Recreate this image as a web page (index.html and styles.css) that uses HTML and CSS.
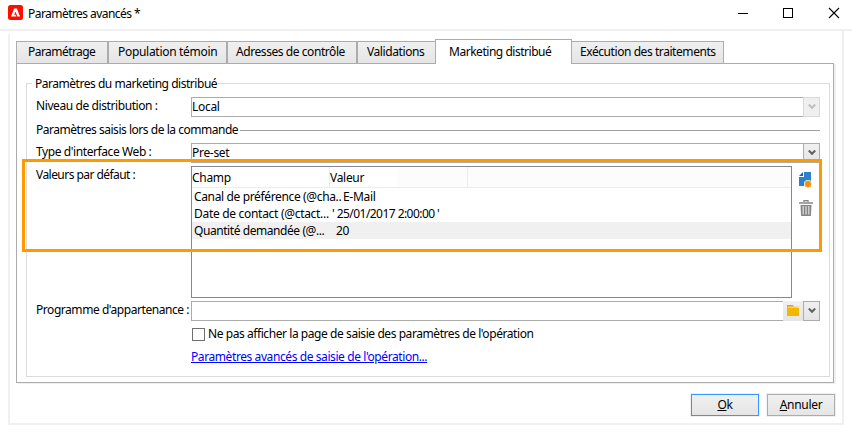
FILE: index.html
```html
<!DOCTYPE html>
<html lang="fr">
<head>
<meta charset="utf-8">
<title>Paramètres avancés</title>
<link rel="stylesheet" href="styles.css">
</head>
<body>
<div class="window">
  <header class="titlebar">
    <svg class="logo" viewBox="0 0 15 15"><rect width="15" height="15" rx="2.5" fill="#fa0f00"/><path d="M3 11.5 6.1 3.6h2.8l3.1 7.9H9.4L7.5 6.7 6.2 9.7h1.6l.7 1.8z" fill="#fff"/></svg>
    <span class="title"><span class="t-title">Paramètres avancés *</span></span>
    <svg class="controls" viewBox="0 0 104 12" fill="none" stroke="#000" shape-rendering="crispEdges"><path d="M0 6.5h10M45.500 1.500h9v9h-9z"/><path d="M91 1l10 10M101 1 91 11" shape-rendering="auto" stroke-width="1.1"/></svg>
  </header>
  <main class="frame">
    <nav class="tabs">
      <div class="tab tab-a"><span class="t-tab1">Paramétrage</span></div>
      <div class="tab tab-b"><span class="t-tab2">Population témoin</span></div>
      <div class="tab tab-c"><span class="t-tab3">Adresses de contrôle</span></div>
      <div class="tab tab-d"><span class="t-tab4">Validations</span></div>
      <div class="tab active"><span class="t-tab5">Marketing distribué</span></div>
      <div class="tab tab-f"><span class="t-tab6">Exécution des traitements</span></div>
    </nav>
    <section class="panel">
      <div class="group">
        <div class="legend"><span class="t-legend">Paramètres du marketing distribué</span></div>
        <div class="row row-level">
          <label><span class="t-level">Niveau de distribution :</span></label>
          <div class="select disabled"><span class="value t-local">Local</span><span class="arrow"><svg viewBox="0 0 8 6"><path d="M.8.5 4 3.800 7.200.5" /></svg></span></div>
        </div>
        <div class="separator"><span class="t-sep">Paramètres saisis lors de la commande</span></div>
        <div class="row row-type">
          <label><span class="t-type">Type d'interface Web :</span></label>
          <div class="select"><span class="value t-preset">Pre-set</span><span class="arrow"><svg viewBox="0 0 8 6"><path d="M.8.5 4 3.800 7.200.5" /></svg></span></div>
        </div>
        <div class="row row-values">
          <label><span class="t-values">Valeurs par défaut :</span></label>
          <div class="table">
            <div class="thead"><div class="th first"><span class="t-champ">Champ</span></div><div class="th second"><span class="t-valeur">Valeur</span></div><div class="th rest"></div></div>
            <div class="tr"><span class="key"><span class="t-k1">Canal de préférence (@cha..</span></span><span class="v1"><span class="t-v1">E-Mail</span></span></div>
            <div class="tr"><span class="key"><span class="t-k2">Date de contact (@ctact...</span></span><span class="v2"><span class="t-v2">' 25/01/2017 2:00:00 '</span></span></div>
            <div class="tr selected"><span class="key"><span class="t-k3">Quantité demandée (@...</span></span><span class="v3"><span class="t-v3">20</span></span></div>
          </div>
          <div class="tools">
            <svg class="add" viewBox="0 0 14 16"><path d="M5 0h7v9H9l-2 2v3H0V5h5z" fill="#2c80cc"/><path d="M4 0v4H0z" fill="#1763ad"/><circle cx="9" cy="12" r="4" fill="#fff"/><path d="M9 8v8M5 12h8M6.200 9.200l5.600 5.600M11.800 9.200l-5.600 5.600" stroke="#f2b04c" stroke-width="1.200"/><circle cx="9" cy="12" r="2.900" fill="#ef9100"/></svg>
            <svg class="trash" viewBox="0 0 14 16"><path d="M5 2V.6h4V2M0 3h14" fill="none" stroke="#858585" stroke-width="1.300"/><path d="M1.500 5h11l-.6 11H2.100z" fill="#858585"/><path d="M4.200 6v8.500M7 6v8.500M9.800 6v8.500" stroke="#d8d8d8" stroke-width="1.300"/></svg>
          </div>
        </div>
        <div class="row row-program">
          <label><span class="t-prog">Programme d'appartenance :</span></label>
          <div class="select program"><span class="value"></span><span class="folder"><svg viewBox="0 0 12 11"><path d="M0 0h6l1 2h5v2H0z" fill="#ef9b1d"/><path d="M1 1.500h11V4H0z" fill="#f9d27a"/><path d="M0 3h12v8H0z" fill="#f0b800"/></svg></span><span class="arrow"><svg viewBox="0 0 8 6"><path d="M.8.5 4 3.800 7.200.5" /></svg></span></div>
        </div>
        <div class="check"><span class="box"></span><span class="t-check">Ne pas afficher la page de saisie des paramètres de l'opération</span></div>
        <div class="linkrow"><a class="link t-link">Paramètres avancés de saisie de l'opération...</a></div>
        <div class="highlight"></div>
      </div>
    </section>
    <footer class="actions">
      <div class="button primary"><span class="t-ok"><u>O</u>k</span></div>
      <div class="button"><span class="t-cancel"><u>A</u>nnuler</span></div>
    </footer>
  </main>
</div>
</body>
</html>
```
FILE: styles.css
```css
* { box-sizing: border-box; }
body { margin: 0; background: #fff; color: #000; font: 12px/16px "Noto Sans", "Open Sans", sans-serif; white-space: nowrap; letter-spacing: -0.3px; }
svg { display: block; flex: none; }
.window { width: 852px; height: 433px; overflow: hidden; }
.titlebar { height: 31px; display: flex; align-items: flex-start; border-bottom: 2px solid #f0f0f0; padding-left: 7.5px; }
.logo { width: 15px; height: 15px; margin-top: 5px; }
.title { margin: 6px 0 0 5.5px; flex: 1; }
.controls { width: 104px; height: 12px; margin: 7px 10px 0 0; }
.frame { position: relative; width: 836px; height: 394px; margin-left: 8px; border: 2px solid #f0f0f0; border-top: 0; padding: 8px 7px 0 6px; }
.frame::before { content: ""; position: absolute; left: -2px; top: 0; width: 2px; height: 3px; background: #fff; }
.tabs { display: flex; align-items: flex-end; height: 25px; margin-bottom: -1px; position: relative; }
.tab { height: 23px; border: 1px solid #acacac; background: linear-gradient(#f0f0f0, #e5e5e5); padding: 2px 0 0 11px; }
.tab-a { width: 92px; }
.tab-b { width: 119px; padding-left: 9px; }
.tab-c { width: 130px; padding-left: 8px; }
.tab-d { width: 78px; padding-left: 9px; border-right: 0; }
.active { width: 137px; height: 25px; background: #fff; border-bottom: 0; padding: 4px 0 0 13px; }
.tab-f { width: 152px; border-left: 0; padding-left: 8px; }
.panel { width: 818px; height: 320px; border: 1px solid #acacac; box-shadow: 2px 1px #f0f0f0; padding: 19px 0 0 9px; }
.group { position: relative; width: 804px; height: 294px; border: 1px solid #dcdcdc; }
.legend { width: max-content; height: 16px; margin: -8px 0 0 5px; padding: 0 1px 0 3px; background: #fff; }
.row { display: flex; padding-left: 9px; }
.row label { width: 155px; flex: none; }
.row-level { margin-top: 5px; }
.row-level label { padding-top: 1px; }
.select { display: flex; width: 629px; height: 20px; border: 1px solid #acacac; border-right: 0; }
.value { flex: 1; padding-top: 1px; }
.arrow { display: grid; place-items: center; width: 17px; height: 20px; margin-top: -1px; border: 1px solid #acacac; background: linear-gradient(#f0f0f0, #e5e5e5); }
.arrow svg { width: 8px; height: 6px; fill: none; stroke: #606060; stroke-width: 2; }
.disabled .arrow { border-color: #d9d9d9; background: #efefef; }
.disabled .arrow svg { stroke: #bfbfbf; }
.separator { display: flex; align-items: center; height: 16px; margin: 5px 9px 0; }
.separator::after { content: ""; flex: 1; height: 1px; margin-left: 2px; background: #a0a0a0; }
.row-type { margin-top: 5px; }
.row-type label { padding-top: 1px; }
.row-values { margin-top: 3px; }
.row-values label { padding-top: 1px; }
.table { width: 601px; height: 132px; border: 1px solid #828790; }
.thead { display: flex; height: 21px; border-bottom: 1px solid #e5eef7; }
.th { height: 20px; border-right: 1px solid #e5eef7; padding-top: 3px; }
.first { width: 138px; }
.second { width: 138px; background: linear-gradient(90deg, #fff 67px, #fcfcfc 67px); }
.rest { flex: 1; background: #fcfcfc; border: 0; }
.tr { display: flex; height: 17px; padding: 1px 0 0 2px; }
.selected { background: #f0f0f0; }
.key { width: 136px; }
.v1 { padding-left: 13px; }
.v2 { padding-left: 2px; }
.v3 { padding-left: 6px; }
.tools { padding: 6px 0 0 7px; }
.add { width: 14px; height: 16px; }
.trash { width: 14px; height: 16px; margin-top: 12px; }
.row-program { margin-top: 3px; }
.row-program label { padding-top: 1px; }
.folder { width: 20px; height: 20px; margin-top: -1px; padding: 4px; background: linear-gradient(#f0f0f0, #e5e5e5); }
.folder svg { width: 12px; height: 11px; }
.check { display: flex; align-items: center; height: 16px; margin: 5px 0 0 165px; }
.box { width: 13px; height: 13px; border: 1px solid #707070; margin-right: 3px; }
.linkrow { margin: 7px 0 0 164px; }
.link { color: #00f; text-decoration: underline; }
.highlight { position: absolute; left: -5px; top: 75px; width: 800px; height: 93px; border: 3px solid #ff9900; }
.actions { display: flex; justify-content: flex-end; gap: 8px; margin-top: 11px; }
.button { width: 68px; height: 22px; border: 1px solid #acacac; box-shadow: 0 0 0 1px #f0f0f0; background: linear-gradient(#f0f0f0, #e5e5e5); text-align: center; padding-top: 2px; }
.primary { border-color: #3399ff; }

/* Tracking per label */
.t-title { letter-spacing: -0.55px; }
.t-tab1 { letter-spacing: -0.55px; }
.t-tab3, .t-tab6, .t-check, .t-k3 { letter-spacing: -0.43px; }
.t-tab4, .t-level, .t-type, .t-link { letter-spacing: -0.41px; }
.t-prog { letter-spacing: -0.45px; }
.t-tab5, .t-legend, .t-sep { letter-spacing: -0.47px; }
.t-values, .t-v2 { letter-spacing: -0.55px; }
.t-k1 { letter-spacing: -0.36px; }
```
